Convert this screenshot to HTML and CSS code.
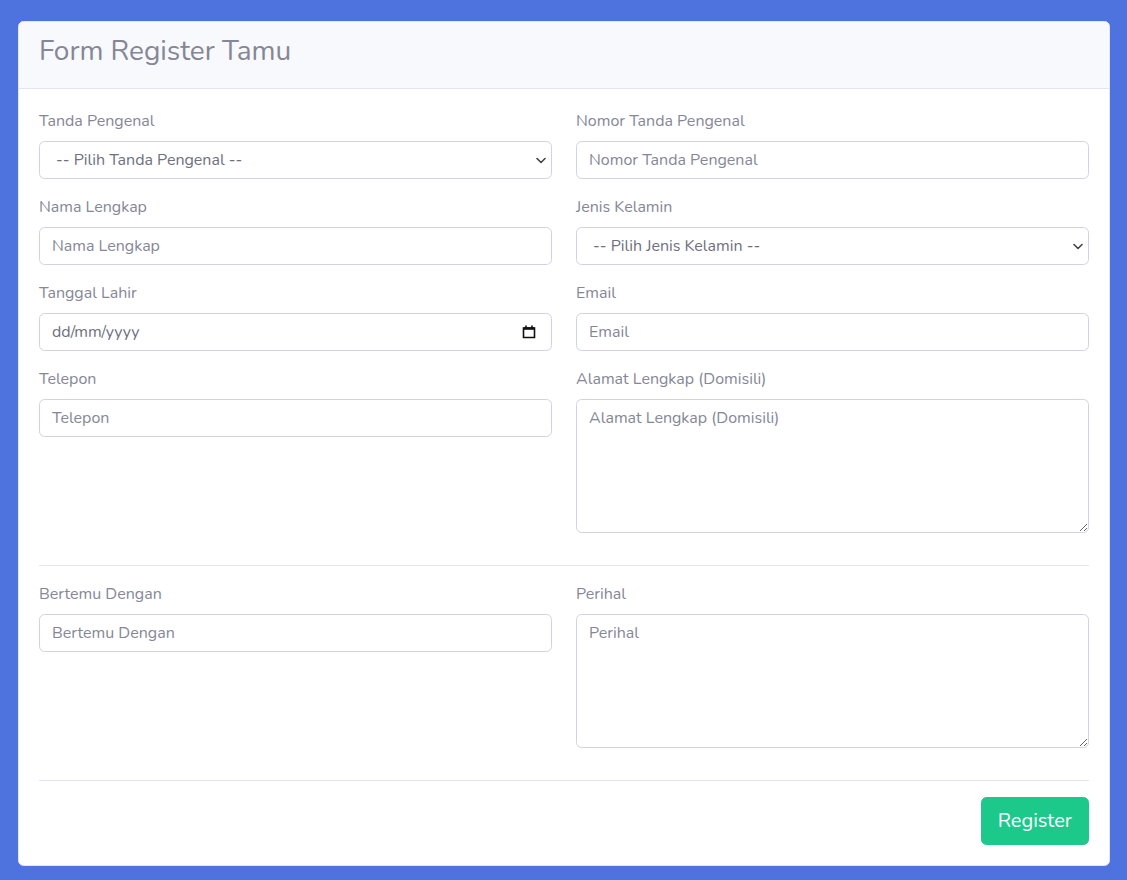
FILE: index.html
```html
<!DOCTYPE html>
<html lang="id">
<head>
<meta charset="utf-8">
<title>Form Register Tamu</title>
<link rel="stylesheet" href="styles.css">
</head>
<body>
<div class="card">
  <div class="card-header">
    <h3 class="card-title">Form Register Tamu</h3>
  </div>
  <form class="card-body">
    <div class="grid">
      <div class="group">
        <label class="label">Tanda Pengenal</label>
        <div class="select-wrap">
          <select class="control select">
            <option>-- Pilih Tanda Pengenal --</option>
            <option>KTP</option>
            <option>SIM</option>
          </select>
          <svg class="chev" width="10" height="7" viewBox="0 0 10 7"><path d="M1 1.5l4 4 4-4" fill="none" stroke="#444" stroke-width="1.6" stroke-linecap="round" stroke-linejoin="round"/></svg>
        </div>
      </div>
      <div class="group">
        <label class="label">Nomor Tanda Pengenal</label>
        <input class="control" type="text" placeholder="Nomor Tanda Pengenal">
      </div>
      <div class="group">
        <label class="label">Nama Lengkap</label>
        <input class="control" type="text" placeholder="Nama Lengkap">
      </div>
      <div class="group">
        <label class="label">Jenis Kelamin</label>
        <div class="select-wrap">
          <select class="control select">
            <option>-- Pilih Jenis Kelamin --</option>
            <option>Laki-laki</option>
            <option>Perempuan</option>
          </select>
          <svg class="chev" width="10" height="7" viewBox="0 0 10 7"><path d="M1 1.5l4 4 4-4" fill="none" stroke="#444" stroke-width="1.6" stroke-linecap="round" stroke-linejoin="round"/></svg>
        </div>
      </div>
      <div class="group">
        <label class="label">Tanggal Lahir</label>
        <div class="select-wrap">
          <input class="control date" type="text" placeholder="dd/mm/yyyy">
          <svg class="cal" width="14" height="14" viewBox="0 0 14 14"><path d="M1.5 3h11v9.5h-11z" fill="none" stroke="#111" stroke-width="1.6"/><path d="M1.5 2.2h11v2.6h-11z" fill="#111"/><path d="M4 0.5v2M10 0.5v2" stroke="#111" stroke-width="1.6"/></svg>
        </div>
      </div>
      <div class="group">
        <label class="label">Email</label>
        <input class="control" type="email" placeholder="Email">
      </div>
      <div class="group">
        <label class="label">Telepon</label>
        <input class="control" type="text" placeholder="Telepon">
      </div>
      <div class="group">
        <label class="label">Alamat Lengkap (Domisili)</label>
        <textarea class="control area" rows="5" placeholder="Alamat Lengkap (Domisili)"></textarea>
      </div>
    </div>
    <hr class="divider">
    <div class="grid">
      <div class="group">
        <label class="label">Bertemu Dengan</label>
        <input class="control" type="text" placeholder="Bertemu Dengan">
      </div>
      <div class="group">
        <label class="label">Perihal</label>
        <textarea class="control area" rows="5" placeholder="Perihal"></textarea>
      </div>
    </div>
    <hr class="divider">
    <div class="actions">
      <button type="button" class="btn">Register</button>
    </div>
  </form>
</div>
</body>
</html>
```

FILE: styles.css
```css
* { box-sizing: border-box; }
html, body { margin: 0; }
body {
  background: #4e73df;
  padding: 21px 17px 15px 18px;
  font-family: "Nunito", "Lato", "Noto Sans", sans-serif;
  font-size: 16px;
  line-height: 1.5;
  color: #858796;
}
.card {
  background: #fff;
  border: 1px solid #e3e6f0;
  border-radius: 5.6px;
  overflow: hidden;
}
.card-header {
  background: #f8f9fc;
  border-bottom: 1px solid #e3e6f0;
  padding: 13px 20px 19px 20px;
}
.card-title {
  margin: 0;
  font-size: 28px;
  font-weight: 400;
  line-height: 1.2;
  color: #858796;
}
.card-body {
  display: block;
  padding: 20px;
}
.grid {
  display: grid;
  grid-template-columns: 1fr 1fr;
  column-gap: 24px;
  align-items: start;
}
.group { margin-bottom: 16px; }
.label {
  display: block;
  margin-bottom: 8px;
  color: #858796;
}
.control {
  display: block;
  width: 100%;
  height: 38px;
  padding: 6px 12px;
  font-family: inherit;
  font-size: 16px;
  line-height: 1.5;
  color: #6e707e;
  background: #fff;
  border: 1px solid #d1d3e2;
  border-radius: 5.6px;
  outline: none;
}
.control::placeholder { color: #858796; opacity: 1; }
.select-wrap { position: relative; }
.select {
  -webkit-appearance: none;
  appearance: none;
  padding-left: 16px;
  padding-right: 32px;
}
.chev {
  position: absolute;
  right: 6px;
  top: 16px;
}
.date::placeholder { color: #6e707e; }
.cal {
  position: absolute;
  right: 16px;
  top: 12px;
}
.area {
  height: 134px;
  resize: vertical;
}
.divider {
  margin: 16px 0;
  border: 0;
  border-top: 1px solid #e3e6f0;
}
.actions {
  display: flex;
  justify-content: flex-end;
}
.btn {
  font-family: inherit;
  font-size: 20px;
  line-height: 1.5;
  padding: 8px 16px;
  color: #fff;
  background: #1cc88a;
  border: 1px solid #1cc88a;
  border-radius: 5.6px;
}
```
